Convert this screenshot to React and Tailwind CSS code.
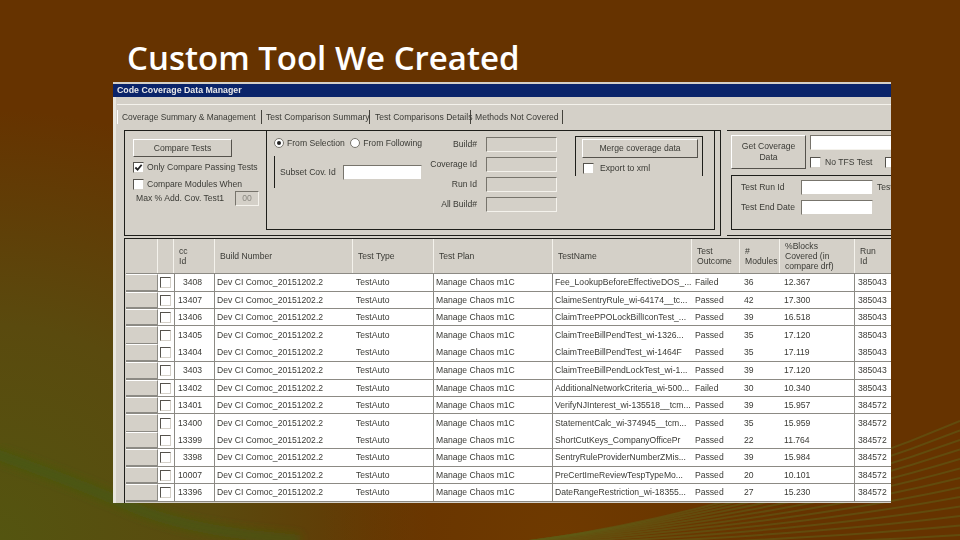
const rows = [
  ["3408", "Fee_LookupBeforeEffectiveDOS_...", "Failed", "36", "12.367", "385043", 18, true],
  ["13407", "ClaimeSentryRule_wi-64174__tc...", "Passed", "42", "17.300", "385043", 17, true],
  ["13406", "ClaimTreePPOLockBillIconTest_...", "Passed", "39", "16.518", "385043", 17, true],
  ["13405", "ClaimTreeBillPendTest_wi-1326...", "Passed", "35", "17.120", "385043", 18, false],
  ["13404", "ClaimTreeBillPendTest_wi-1464F", "Passed", "35", "17.119", "385043", 18, true],
  ["3403", "ClaimTreeBillPendLockTest_wi-1...", "Passed", "39", "17.120", "385043", 18, true],
  ["13402", "AdditionalNetworkCriteria_wi-500...", "Failed", "30", "10.340", "385043", 17, true],
  ["13401", "VerifyNJInterest_wi-135518__tcm...", "Passed", "39", "15.957", "384572", 17, true],
  ["13400", "StatementCalc_wi-374945__tcm...", "Passed", "35", "15.959", "384572", 18, false],
  ["13399", "ShortCutKeys_CompanyOfficePr", "Passed", "22", "11.764", "384572", 17, true],
  ["3398", "SentryRuleProviderNumberZMis...", "Passed", "39", "15.984", "384572", 18, true],
  ["10007", "PreCertImeReviewTespTypeMo...", "Passed", "20", "10.101", "384572", 17, true],
  ["13396", "DateRangeRestriction_wi-18355...", "Passed", "27", "15.230", "384572", 18, true],
];

const stripes = [0, 1, 2, 3, 4, 5, 6, 7, 8, 9, 10, 11, 12];

function CheckBox({ checked }) {
  return (
    <span className="flex h-[11px] w-[11px] shrink-0 items-center justify-center border border-t-[#55524c] border-l-[#55524c] border-r-[#d4d0c8] border-b-[#d4d0c8] bg-white">
      {checked && (
        <svg viewBox="0 0 10 10" className="h-[9px] w-[9px]">
          <path d="M1.5 5 L4 7.5 L8.5 2" fill="none" stroke="#222" strokeWidth="2" />
        </svg>
      )}
    </span>
  );
}

function Radio({ checked }) {
  return (
    <span className="flex h-[10px] w-[10px] shrink-0 items-center justify-center rounded-full border border-[#77746c] bg-white">
      {checked && <span className="h-[4px] w-[4px] rounded-full bg-[#222]" />}
    </span>
  );
}

function Button({ className, children }) {
  return (
    <div className={"flex items-center justify-center border border-t-white border-l-white border-r-[#55524c] border-b-[#55524c] text-center " + className}>
      {children}
    </div>
  );
}

function Field({ className }) {
  return <div className={"border border-t-[#77746c] border-l-[#77746c] border-r-[#f4f2ec] border-b-[#f4f2ec] " + className} />;
}

function Input({ className }) {
  return <div className={"shrink-0 border border-t-[#77746c] border-l-[#77746c] border-r-[#d4d0c8] border-b-[#d4d0c8] bg-white " + className} />;
}

function Tab({ className, children }) {
  return (
    <div className={"flex h-[14px] items-center whitespace-nowrap border-r border-r-[#44423c] " + className}>
      {children}
    </div>
  );
}

function Cell({ className, children }) {
  return <div className={"flex shrink-0 items-center overflow-hidden whitespace-nowrap " + className}>{children}</div>;
}

function HeadCell({ className, children }) {
  return <div className={"flex shrink-0 items-center border-r border-r-[#f4f2ec] pl-[5px] leading-[10px] " + className}>{children}</div>;
}

export default function App() {
  return (
    <div className="relative h-[540px] w-[960px] overflow-hidden bg-[#663300] font-['Liberation_Sans',sans-serif]">
      {/* slide background */}
      <svg className="absolute inset-0" width="960" height="540" viewBox="0 0 960 540">
        <defs>
          <radialGradient id="olive" cx="0" cy="540" r="430" gradientUnits="userSpaceOnUse">
            <stop offset="0" stopColor="#545510" />
            <stop offset="0.5" stopColor="#5a4a0e" />
            <stop offset="1" stopColor="#663300" />
          </radialGradient>
          <radialGradient id="warm" cx="560" cy="540" r="240" gradientUnits="userSpaceOnUse">
            <stop offset="0" stopColor="#6f3a00" />
            <stop offset="1" stopColor="#6f3a00" stopOpacity="0" />
          </radialGradient>
          <filter id="soft">
            <feGaussianBlur stdDeviation="5" />
          </filter>
        </defs>
        <rect width="960" height="540" fill="url(#olive)" />
        <rect width="960" height="540" fill="url(#warm)" />
        <path d="M-10 452 Q 70 480 130 506 T 300 540" fill="none" stroke="#3f5c14" strokeWidth="10" strokeOpacity="0.65" filter="url(#soft)" />
        {stripes.map((i) => (
          <path key={i} d={`M${540 - i * 10} ${540 + i} Q 760 ${506 + i * 3.5} 960 ${421 + i * 9.5}`} fill="none" stroke="#5f5c16" strokeOpacity="0.6" strokeWidth="2" />
        ))}
      </svg>

      <div className="relative flex h-full flex-col pl-[113px]">
        <h1 className="h-[82px] pl-[14px] pt-[36px] text-[33px] font-semibold leading-[44px] text-white font-['Open_Sans',sans-serif]">
          Custom Tool We Created
        </h1>

        {/* application window */}
        <div className="flex h-[421px] w-[778px] flex-col overflow-hidden bg-[#d4d0c8] pt-[2px] text-[8.6px] leading-none text-[#3a3a35] blur-[0.3px]">
          <div className="flex h-[13px] shrink-0 items-center bg-[#0a246a] pl-[4px] text-[8.8px] font-bold text-[#e8e8e8]">
            Code Coverage Data Manager
          </div>

          <div className="flex flex-1 flex-col overflow-hidden border-l-[3px] border-l-[#e8e6df]">
            <div className="ml-px mt-[7px] h-px shrink-0 bg-[#f4f2ec]" />
            <div className="flex h-[25px] shrink-0 items-start pl-px pt-[5px]">
              <Tab className="w-[145px] border-l border-l-white pl-[4px] text-[8.4px]">Coverage Summary &amp; Management</Tab>
              <Tab className="w-[108px] pl-[4px]">Test Comparison Summary</Tab>
              <Tab className="w-[101px] pl-[5px]">Test Comparisons Details</Tab>
              <Tab className="w-[92px] pl-[4px]">Methods Not Covered</Tab>
            </div>

            <div className="flex h-[106px] shrink-0 pl-[8px]">
              {/* compare group */}
              <div className="flex h-[106px] w-[597px] border border-[#1e1e1a] pr-[5px]">
                <div className="flex w-[141px] shrink-0 flex-col pl-[8px] pt-[8px]">
                  <Button className="h-[18px] w-[99px]">Compare Tests</Button>
                  <label className="mt-[5px] flex h-[11px] items-center gap-[3px]">
                    <CheckBox checked />
                    <span className="whitespace-nowrap">Only Compare Passing Tests</span>
                  </label>
                  <label className="mt-[6px] flex h-[11px] items-center gap-[3px]">
                    <CheckBox />
                    <span className="whitespace-nowrap">Compare Modules When</span>
                  </label>
                  <div className="mt-px flex items-center pl-[3px]">
                    <span className="w-[99px] whitespace-nowrap">Max % Add. Cov. Test1</span>
                    <div className="flex h-[15px] w-[24px] items-center justify-center border border-t-[#77746c] border-l-[#77746c] border-r-[#f4f2ec] border-b-[#f4f2ec] text-[#8a8880]">
                      00
                    </div>
                  </div>
                </div>

                <div className="-mt-px flex h-[100px] flex-1 border border-[#1e1e1a]">
                  <div className="w-[155px] shrink-0 pl-[7px] pt-[7px]">
                    <div className="flex items-center gap-[3px]">
                      <Radio checked />
                      <span className="w-[65px] whitespace-nowrap">From Selection</span>
                      <Radio />
                      <span className="whitespace-nowrap">From Following</span>
                    </div>
                    <div className="mt-[8px] flex h-[32px] items-center gap-[6px] border-l border-l-[#1e1e1a] pl-[5px]">
                      <span className="w-[57px] whitespace-nowrap">Subset Cov. Id</span>
                      <Input className="h-[15px] w-[79px]" />
                    </div>
                  </div>

                  <div className="flex w-[55px] shrink-0 flex-col gap-[5px] pt-[6px]">
                    {["Build#", "Coverage Id", "Run Id", "All Build#"].map((label) => (
                      <div key={label} className="flex h-[15px] items-center justify-end whitespace-nowrap">
                        {label}
                      </div>
                    ))}
                  </div>

                  <div className="ml-[9px] flex w-[71px] shrink-0 flex-col gap-[5px] pt-[6px]">
                    <Field className="h-[15px]" />
                    <Field className="h-[15px]" />
                    <Field className="h-[15px]" />
                    <Field className="h-[15px]" />
                  </div>

                  <div className="ml-[18px] mt-[5px] flex h-[40px] w-[128px] flex-col border-x border-t border-[#1e1e1a] px-[6px] pt-[2px]">
                    <Button className="h-[19px] w-[116px] shrink-0">Merge coverage data</Button>
                    <label className="mt-[5px] flex h-[11px] items-center gap-[6px] pl-px">
                      <CheckBox />
                      <span className="whitespace-nowrap">Export to xml</span>
                    </label>
                  </div>
                </div>
              </div>

              {/* get coverage group */}
              <div className="ml-[6px] flex h-[106px] w-[164px] flex-col border-y border-y-[#1e1e1a] pl-[4px] pt-[4px]">
                <div className="flex h-[34px] gap-[4px]">
                  <Button className="h-[34px] w-[75px] shrink-0 leading-[11px]">Get Coverage<br />Data</Button>
                  <div className="flex-1">
                    <div className="h-[15px] border border-r-0 border-t-[#77746c] border-l-[#77746c] border-b-[#f4f2ec] bg-white" />
                    <div className="mt-[7px] flex items-center">
                      <CheckBox />
                      <span className="ml-[4px] w-[60px] whitespace-nowrap">No TFS Test</span>
                      <CheckBox />
                    </div>
                  </div>
                </div>
                <div className="mt-[6px] flex h-[55px] flex-col gap-[5px] border-y border-l border-[#1e1e1a] pl-[9px] pt-[4px]">
                  <div className="flex items-center">
                    <span className="w-[60px] shrink-0 whitespace-nowrap">Test Run Id</span>
                    <Input className="h-[15px] w-[72px]" />
                    <span className="ml-[4px]">Test</span>
                  </div>
                  <div className="flex items-center">
                    <span className="w-[60px] shrink-0 whitespace-nowrap">Test End Date</span>
                    <Input className="h-[15px] w-[72px]" />
                  </div>
                </div>
              </div>
            </div>

            {/* results grid */}
            <div className="ml-[8px] mt-[2px] flex-1 overflow-hidden border-l border-t border-l-[#1e1e1a] border-t-[#1e1e1a] pl-px">
              <div className="flex h-[35px] border-b border-b-[#8c8a84]">
                <HeadCell className="w-[32px]" />
                <HeadCell className="w-[16px]" />
                <HeadCell className="w-[41px]"><span>cc<br />Id</span></HeadCell>
                <HeadCell className="w-[138px]">Build Number</HeadCell>
                <HeadCell className="w-[81px]">Test Type</HeadCell>
                <HeadCell className="w-[119px]">Test Plan</HeadCell>
                <HeadCell className="w-[139px]">TestName</HeadCell>
                <HeadCell className="w-[48px]"><span>Test<br />Outcome</span></HeadCell>
                <HeadCell className="w-[40px]"><span>#<br />Modules</span></HeadCell>
                <HeadCell className="w-[75px] pl-[4px]"><span>%Blocks<br />Covered (in<br />compare drf)</span></HeadCell>
                <HeadCell className="w-[37px] border-r-0"><span>Run<br />Id</span></HeadCell>
              </div>
              {rows.map((r) => (
                <div
                  key={r[0]}
                  style={{ height: r[6] }}
                  className={"flex bg-white " + (r[7] ? "border-b border-b-[#8c8a84]" : "")}
                >
                  <div className="w-[32px] shrink-0 border-b border-r border-t border-b-[#8c8a84] border-r-[#8c8a84] border-t-white bg-[#d4d0c8]" />
                  <Cell className="w-[16px] pl-[2px]"><CheckBox /></Cell>
                  <Cell className="w-[41px] justify-end border-x border-x-[#8c8a84] pr-[12px]">{r[0]}</Cell>
                  <Cell className="w-[138px] pl-[2px]">Dev CI Comoc_20151202.2</Cell>
                  <Cell className="w-[81px] border-r border-r-[#8c8a84] pl-[3px]">TestAuto</Cell>
                  <Cell className="w-[119px] border-r border-r-[#8c8a84] pl-[2px]">Manage Chaos m1C</Cell>
                  <Cell className="w-[139px] pl-[2px]">{r[1]}</Cell>
                  <Cell className="w-[48px] pl-[3px]">{r[2]}</Cell>
                  <Cell className="w-[40px] pl-[4px]">{r[3]}</Cell>
                  <Cell className="w-[75px] border-r border-r-[#8c8a84] pl-[4px]">{r[4]}</Cell>
                  <Cell className="w-[37px] pl-[3px]">{r[5]}</Cell>
                </div>
              ))}
            </div>
          </div>
        </div>
      </div>
    </div>
  );
}
